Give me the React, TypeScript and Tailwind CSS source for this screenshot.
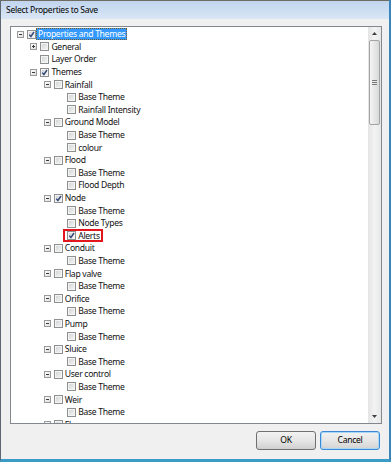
import { clsx } from "clsx";

type Row = {
  level: 0 | 1 | 2 | 3;
  exp?: "open" | "closed";
  checked?: boolean;
  label: string;
  selected?: boolean;
  marked?: boolean;
};

const rows: Row[] = [
  { level: 0, exp: "open", checked: true, label: "Properties and Themes", selected: true },
  { level: 1, exp: "closed", label: "General" },
  { level: 1, label: "Layer Order" },
  { level: 1, exp: "open", checked: true, label: "Themes" },
  { level: 2, exp: "open", label: "Rainfall" },
  { level: 3, label: "Base Theme" },
  { level: 3, label: "Rainfall Intensity" },
  { level: 2, exp: "open", label: "Ground Model" },
  { level: 3, label: "Base Theme" },
  { level: 3, label: "colour" },
  { level: 2, exp: "open", label: "Flood" },
  { level: 3, label: "Base Theme" },
  { level: 3, label: "Flood Depth" },
  { level: 2, exp: "open", checked: true, label: "Node" },
  { level: 3, label: "Base Theme" },
  { level: 3, label: "Node Types" },
  { level: 3, checked: true, label: "Alerts", marked: true },
  { level: 2, exp: "open", label: "Conduit" },
  { level: 3, label: "Base Theme" },
  { level: 2, exp: "open", label: "Flap valve" },
  { level: 3, label: "Base Theme" },
  { level: 2, exp: "open", label: "Orifice" },
  { level: 3, label: "Base Theme" },
  { level: 2, exp: "open", label: "Pump" },
  { level: 3, label: "Base Theme" },
  { level: 2, exp: "open", label: "Sluice" },
  { level: 3, label: "Base Theme" },
  { level: 2, exp: "open", label: "User control" },
  { level: 3, label: "Base Theme" },
  { level: 2, exp: "open", label: "Weir" },
  { level: 3, label: "Base Theme" },
  { level: 2, exp: "open", label: "Flume" },
];

const indent = ["pl-[6px]", "pl-[19.4px]", "pl-[32.8px]", "pl-[46.2px]"];

function Expander({ open }: { open: boolean }) {
  return (
    <svg width="7" height="7" viewBox="0 0 7 7">
      <defs>
        <linearGradient id="exg" x1="0" y1="0" x2="1" y2="1">
          <stop offset="0" stopColor="#ffffff" />
          <stop offset="1" stopColor="#dcdcdc" />
        </linearGradient>
      </defs>
      <rect x="0.5" y="0.5" width="6" height="6" fill="url(#exg)" stroke="#9a9a9a" />
      <line x1="2" y1="3.5" x2="5" y2="3.5" stroke="#3a3a3a" />
      {!open && <line x1="3.5" y1="2" x2="3.5" y2="5" stroke="#3a3a3a" />}
    </svg>
  );
}

function CheckBox({ checked }: { checked?: boolean }) {
  return (
    <span className="relative flex h-[9px] w-[9px] shrink-0 items-center justify-center border border-[#8e8f8f] bg-gradient-to-br from-[#cfd1d4] to-[#f7f7f7] shadow-[inset_0_0_0_1px_#f4f4f4]">
      {checked && (
        <svg width="7" height="7" viewBox="0 0 7 7" className="absolute">
          <path d="M1.2 3.6 L2.9 5.5 L6 1" fill="none" stroke="#34497a" strokeWidth="1.4" />
        </svg>
      )}
    </span>
  );
}

function TreeRow({ row }: { row: Row }) {
  return (
    <div className={clsx("flex h-[12.6px] items-center", indent[row.level])}>
      <span className="flex w-[10px] shrink-0 items-center">
        {row.exp && <Expander open={row.exp === "open"} />}
      </span>
      <span className="relative flex items-center">
        <CheckBox checked={row.checked} />
        <span
          className={clsx(
            "whitespace-nowrap px-[2px] leading-[12px]",
            row.selected
              ? "bg-[#3399ff] text-white outline-1 -outline-offset-1 outline-dotted outline-[#7b5a2c]"
              : "text-[#111]",
          )}
        >
          {row.label}
        </span>
        {row.marked && (
          <span className="absolute -left-[4px] -top-[1px] h-[13px] w-[40px] border-2 border-[#e4161d]" />
        )}
      </span>
    </div>
  );
}

function ScrollBar() {
  return (
    <div className="flex h-full w-[13px] shrink-0 flex-col bg-gradient-to-r from-[#e4e4e4] via-[#f3f3f3] to-[#e7e7e7]">
      <div className="flex h-[13px] items-center justify-center">
        <svg width="5" height="3" viewBox="0 0 5 3">
          <path d="M0 3 L2.5 0 L5 3 Z" fill="#404040" />
        </svg>
      </div>
      <div className="mx-[1px] flex h-[85px] items-center justify-center rounded-[2px] border border-[#a3a3a3] bg-gradient-to-r from-[#f5f5f5] to-[#d9d9d9]">
        <div className="flex flex-col gap-[1px]">
          <div className="h-px w-[5px] bg-[#7a7a7a]" />
          <div className="h-px w-[5px] bg-[#7a7a7a]" />
          <div className="h-px w-[5px] bg-[#7a7a7a]" />
        </div>
      </div>
      <div className="flex-1" />
      <div className="flex h-[13px] items-center justify-center">
        <svg width="5" height="3" viewBox="0 0 5 3">
          <path d="M0 0 L5 0 L2.5 3 Z" fill="#404040" />
        </svg>
      </div>
    </div>
  );
}

export default function App() {
  return (
    <div className="flex h-[462px] w-[391px] flex-col overflow-hidden border-b-[3px] border-l border-r-2 border-b-[#3a9cc6] border-l-[#5c6773] border-r-[#3a86b8] bg-[#f0f0f0] font-[family-name:'Noto_Sans',sans-serif] text-[8.6px] tracking-[-0.3px]">
      <div className="flex h-[19px] shrink-0 items-center border-t border-[#6f6c62] bg-gradient-to-b from-[#c1d5ee] to-[#d9e6f5] pl-[5px] text-[8.6px] text-black">
        Select Properties to Save
      </div>

      <div className="ml-[9px] mt-[7px] flex h-[398px] w-[372px] shrink-0 border border-[#828790] bg-white">
        <div className="flex-1 overflow-hidden pt-[1px]">
          {rows.map((row, i) => (
            <TreeRow key={i} row={row} />
          ))}
        </div>
        <ScrollBar />
      </div>

      <div className="mt-[7px] flex justify-end gap-[4px] pr-[9px]">
        <button className="flex h-[19px] w-[60px] items-center justify-center rounded-[3px] border border-[#707070] bg-gradient-to-b from-[#f2f2f2] via-[#e6e6e6] to-[#d0d0d0] text-black">
          OK
        </button>
        <button className="flex h-[19px] w-[60px] items-center justify-center rounded-[3px] border border-[#3c8ad6] bg-gradient-to-b from-[#f2f2f2] via-[#e6e6e6] to-[#d3d3d3] text-black shadow-[inset_0_0_0_1px_#a9d8f7]">
          Cancel
        </button>
      </div>
    </div>
  );
}
